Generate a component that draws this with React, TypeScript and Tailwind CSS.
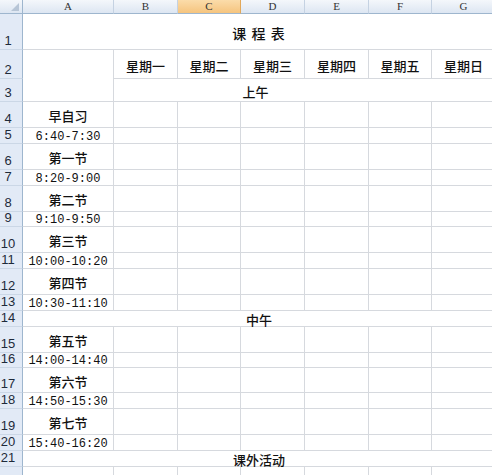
import React from "react";

const COLS = ["A", "B", "C", "D", "E", "F", "G"];
const DAYS = ["星期一", "星期二", "星期三", "星期四", "星期五", "星期日"];

// [label, time] pairs, each takes a tall row + a short row
const MORNING = [
  ["早自习", "6:40-7:30"],
  ["第一节", "8:20-9:00"],
  ["第二节", "9:10-9:50"],
  ["第三节", "10:00-10:20"],
  ["第四节", "10:30-11:10"],
];
const AFTERNOON = [
  ["第五节", "14:00-14:40"],
  ["第六节", "14:50-15:30"],
  ["第七节", "15:40-16:20"],
];

const cjk = "font-['Noto_Sans_CJK_SC','Noto_Sans',sans-serif] font-medium";
const mono = "font-['Liberation_Mono','DejaVu_Sans_Mono',monospace]";
const line = "border-r border-b border-[#d6d9de]";

const RowHead = ({ n }: { n: number }) => (
  <div className="flex items-end bg-[#e2eaf6] border-r border-r-[#9eb6ce] border-b border-b-[#cbd7e6] font-['Liberation_Sans',Arial,sans-serif] text-[13px] leading-none text-[#1e2a3a]">
    <span className="w-[16px] text-center pb-[2px]">{n}</span>
  </div>
);

const Blank = () => <div className={line} />;

const Text = ({ children, className = "" }: { children?: React.ReactNode; className?: string }) => (
  <div className={`${line} flex items-center justify-center pt-[2px] text-[#111] leading-none ${className}`}>
    {children}
  </div>
);

export default function App() {
  let r = 4;
  const block = (items: string[][]) =>
    items.flatMap(([label, time]) => {
      const a = r++;
      const b = r++;
      return [
        <RowHead key={`h${a}`} n={a} />,
        <Text key={`l${a}`} className={`${cjk} text-[13px]`}>{label}</Text>,
        ...DAYS.map((d) => <Blank key={`b${a}${d}`} />),
        <RowHead key={`h${b}`} n={b} />,
        <Text key={`t${b}`} className={`${mono} text-[12px] pt-[1px]`}>{time}</Text>,
        ...DAYS.map((d) => <Blank key={`b${b}${d}`} />),
      ];
    });

  const morning = block(MORNING);
  const noonRow = r++;
  const afternoon = block(AFTERNOON);
  const activityRow = r++;
  const eveningRow = r++;

  return (
    <div className="w-[492px] h-[475px] overflow-hidden bg-white">
      <div className="grid w-[496px] grid-cols-[23px_91px_64px_63px_64px_64px_63px_64px] grid-rows-[14px_36px_29px_23px_26px_16px_26px_16px_26px_15px_26px_16px_26px_16px_16px_26px_15px_25px_16px_26px_16px_16px_26px]">
        {/* column headers */}
        <div className="relative bg-linear-to-b from-[#f4f7fb] to-[#dde6f2] border-r border-r-[#9eb6ce] border-b border-b-[#9eb6ce]">
          <div className="absolute right-[3px] bottom-[2px] w-0 h-0 border-l-[8px] border-l-transparent border-b-[8px] border-b-[#b7c5d6]" />
        </div>
        {COLS.map((c) => (
          <div
            key={c}
            className={`flex items-center justify-center border-r border-b border-b-[#9eb6ce] font-['Liberation_Serif','DejaVu_Serif',serif] text-[11px] leading-none text-[#333] ${
              c === "C"
                ? "bg-linear-to-b from-[#fbdcaa] to-[#f5c47e] border-r-[#e2a85a]"
                : "bg-linear-to-b from-[#f4f7fb] to-[#dde6f2] border-r-[#c5d2e2]"
            }`}
          >
            {c}
          </div>
        ))}

        {/* row 1: title */}
        <RowHead n={1} />
        <Text className={`col-span-7 ${cjk} text-[14px] tracking-[1px]`}>课 程 表</Text>

        {/* row 2: weekdays */}
        <RowHead n={2} />
        <div className={`row-span-2 ${line}`} />
        {DAYS.map((d) => (
          <Text key={d} className={`${cjk} text-[13px]`}>{d}</Text>
        ))}

        {/* row 3: morning */}
        <RowHead n={3} />
        <Text className={`col-span-6 ${cjk} text-[13px] pr-[98px]`}>上午</Text>

        {morning}

        <RowHead n={noonRow} />
        <Text className={`col-span-7 ${cjk} text-[13px]`}>中午</Text>

        {afternoon}

        <RowHead n={activityRow} />
        <Text className={`col-span-7 ${cjk} text-[13px]`}>课外活动</Text>

        <RowHead n={eveningRow} />
        <Text className={`${cjk} text-[13px]`}>晚自习</Text>
        {DAYS.map((d) => (
          <Blank key={`e${d}`} />
        ))}
      </div>
    </div>
  );
}
